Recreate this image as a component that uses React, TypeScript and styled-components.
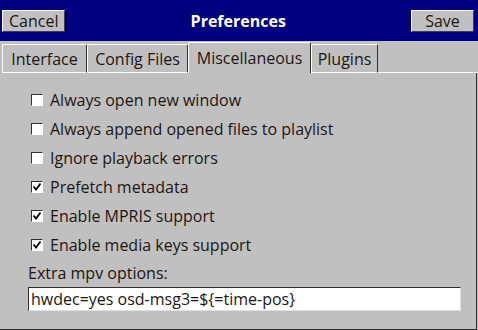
import React from 'react';
import styled, { createGlobalStyle } from 'styled-components';

const options = [
  { label: 'Always open new window', checked: false },
  { label: 'Always append opened files to playlist', checked: false },
  { label: 'Ignore playback errors', checked: false },
  { label: 'Prefetch metadata', checked: true },
  { label: 'Enable MPRIS support', checked: true },
  { label: 'Enable media keys support', checked: true },
];

const tabs = [
  { title: 'Interface', width: 85 },
  { title: 'Config Files', width: 101 },
  { title: 'Miscellaneous', width: 123 },
  { title: 'Plugins', width: 67 },
];

const App: React.FC = () => {
  const [values, setValues] = React.useState(options.map((o) => o.checked));
  const [extra, setExtra] = React.useState('hwdec=yes osd-msg3=${=time-pos}');

  const toggle = (i: number) => () => {
    setValues((v) => v.map((x, j) => (j === i ? !x : x)));
  };

  return (
    <>
      <GlobalStyle />
      <Window>
        <TitleBar>
          <BarButton>Cancel</BarButton>
          <Title>Preferences</Title>
          <BarButton>Save</BarButton>
        </TitleBar>
        <TabStrip>
          {tabs.map((t) => (
            <Tab key={t.title} w={t.width} active={t.title === 'Miscellaneous'}>{t.title}</Tab>
          ))}
          <TabFill />
        </TabStrip>
        <Panel>
          {options.map((o, i) => (
            <Row key={o.label} onClick={toggle(i)}>
              <Box>
                {values[i] && (
                  <svg width="10" height="10" viewBox="0 0 10 10">
                    <path d="M1.5 4.5 L4 7.5 L8.5 1.5" fill="none" stroke="#000" strokeWidth="1.8" />
                  </svg>
                )}
              </Box>
              <span>{o.label}</span>
            </Row>
          ))}
          <Label>Extra mpv options:</Label>
          <Input value={extra} onChange={(e) => setExtra(e.target.value)} />
        </Panel>
      </Window>
    </>
  );
};

const GlobalStyle = createGlobalStyle`
  html, body {
    margin: 0;
    padding: 0;
    background: #c0c0c0;
  }
  body {
    font-family: "Open Sans", "Noto Sans", sans-serif;
    color: #1c1610;
  }
`;

const Window = styled.div`
  width: 478px;
  height: 330px;
  display: flex;
  flex-direction: column;
  background: #c0c0c0;
  overflow: hidden;
`;

const TitleBar = styled.div`
  height: 41px;
  background: #000080;
  display: flex;
  align-items: center;
  justify-content: space-between;
  padding: 0 4px 0 2px;
  box-sizing: border-box;
`;

const Title = styled.div`
  color: #fff;
  font-weight: bold;
  font-size: 16px;
`;

const BarButton = styled.button`
  height: 22px;
  min-width: 63px;
  padding: 0 6px;
  background: #c0c0c0;
  border: 1px solid;
  border-color: #fff #404040 #404040 #fff;
  font-family: inherit;
  font-size: 16px;
  color: #1c1610;
  line-height: 1;
`;

const TabStrip = styled.div`
  display: flex;
  align-items: flex-end;
  height: 32px;
  padding: 0 0 0 2px;
`;

const Tab = styled.div<{ active?: boolean; w: number }>`
  width: ${(p) => p.w}px;
  height: ${(p) => (p.active ? 31 : 29)}px;
  box-sizing: border-box;
  display: flex;
  align-items: center;
  justify-content: center;
  font-size: 16px;
  white-space: nowrap;
  border-top: 1px solid #fff;
  border-left: 1px solid #fff;
  border-right: 1px solid #303030;
  border-bottom: ${(p) => (p.active ? 'none' : '1px solid #fff')};
  border-radius: 2px 2px 0 0;
  background: #c0c0c0;
`;

const TabFill = styled.div`
  flex: 1;
  border-bottom: 1px solid #fff;
  align-self: stretch;
`;

const Panel = styled.div`
  flex: 1;
  display: flex;
  flex-direction: column;
  padding: 12px 16px 0 28px;
  border-right: 1px solid #303030;
  border-bottom: 1px solid #303030;
  margin-right: 1px;
`;

const Row = styled.label`
  display: flex;
  align-items: center;
  gap: 7px;
  height: 29px;
  font-size: 16px;
  padding-left: 3px;
  cursor: default;
`;

const Box = styled.span`
  width: 12px;
  height: 12px;
  box-sizing: border-box;
  background: #fff;
  border: 1px solid;
  border-color: #303030 #fff #fff #303030;
  display: flex;
  align-items: center;
  justify-content: center;
`;

const Label = styled.div`
  font-size: 16px;
  height: 27px;
  display: flex;
  align-items: center;
`;

const Input = styled.input`
  width: 433px;
  height: 24px;
  box-sizing: border-box;
  margin-top: 1px;
  border: 1px solid;
  border-color: #303030 #e0e0e0 #e0e0e0 #303030;
  background: #fff;
  font-family: inherit;
  font-size: 16px;
  color: #1c1610;
  padding: 0 2px;
  outline: none;
`;

export default App;
